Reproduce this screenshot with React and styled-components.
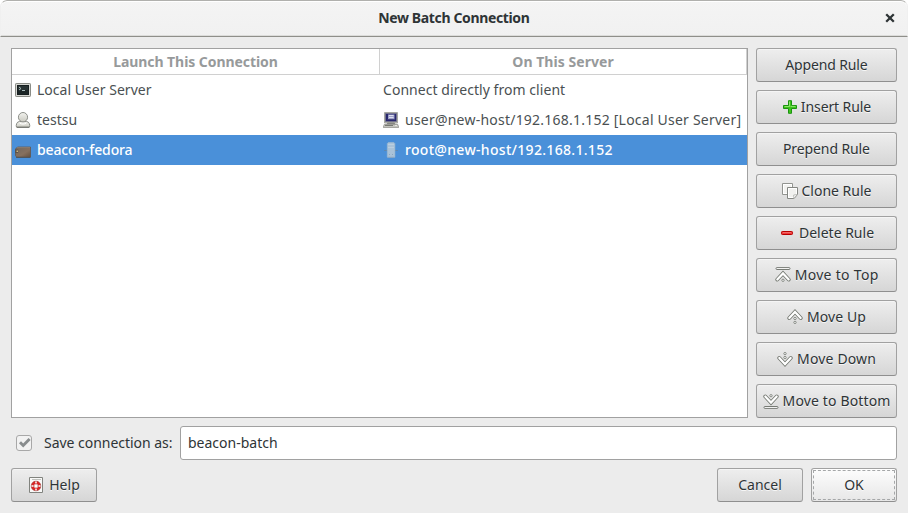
import React from 'react';
import styled, { createGlobalStyle, css } from 'styled-components';

const GlobalStyle = createGlobalStyle`
  *, *::before, *::after { box-sizing: border-box; }
  html, body { margin: 0; background: #fff; overflow: hidden; }
  body { font: 14px/20px "Noto Sans", "Open Sans", sans-serif; color: #2e3436; }
`;

const Dialog = styled.main`
  display: flex;
  flex-direction: column;
  width: 908px;
  height: 513px;
  background: #ececec;
  border-radius: 7px 7px 0 0;
  overflow: hidden;
`;

const TitleBar = styled.header`
  display: grid;
  grid-template-columns: 36px 1fr 36px;
  align-items: center;
  height: 37px;
  flex: none;
  background: linear-gradient(#f4f4f4, #f1f1f1);
  border: 1px solid #f0f0f0;
  border-top-color: #b0b0ad;
  border-bottom: 1px solid #8f8f8a;
  border-radius: 7px 7px 0 0;
  box-shadow: inset 0 1px #fff, inset 0 -1px #dcdcda;
`;

const Title = styled.h1`
  grid-column: 2;
  margin: 0;
  padding-bottom: 1px;
  text-align: center;
  font-size: 14px;
  line-height: 20px;
  font-weight: 700;
`;

const CloseButton = styled.button`
  display: grid;
  place-items: center;
  width: 36px;
  height: 34px;
  padding: 0 0 1px 1px;
  border: 0;
  background: none;
  color: #2e3436;
`;

const Text = styled.span`
  white-space: pre;
  letter-spacing: ${(p) => p.$track || 0}px;
  margin-right: ${(p) => -(p.$track || 0)}px;
`;

const Content = styled.div`
  display: flex;
  flex-direction: column;
  gap: 8px;
  padding: 11px 11px 0;
`;

const MainArea = styled.div`
  display: grid;
  grid-template-columns: 737px 141px;
  gap: 8px;
  height: 370px;
`;

const List = styled.section`
  border: 1px solid #a1a1a1;
  background: #fff;
`;

const columns = css`
  display: grid;
  grid-template-columns: 368px 1fr;
`;

const ListHeader = styled.div`
  ${columns}
  height: 26px;
  border-bottom: 1px solid #d0d0d0;
  border-right: 1px solid #d0d0d0;
  color: #979a9b;
  font-weight: 700;
  line-height: 25px;
  text-align: center;
`;

const HeaderCell = styled.div`
  border-right: ${(p) => (p.$divided ? '1px solid #d0d0d0' : '0')};
`;

const Row = styled.div`
  ${columns}
  height: 30px;
  color: ${(p) => (p.$selected ? '#fff' : '#4a5052')};
  font-weight: ${(p) => (p.$selected ? 500 : 400)};
  background: ${(p) => (p.$selected ? '#4a90d9' : '#fff')};
`;

const Cell = styled.div`
  display: flex;
  align-items: center;
  gap: 6px;
  padding-left: 3px;
`;

const Actions = styled.nav`
  display: flex;
  flex-direction: column;
  gap: 8px;
`;

const Button = styled.button`
  display: flex;
  align-items: center;
  justify-content: center;
  gap: ${(p) => p.$gap || 4}px;
  width: ${(p) => p.$width || 141}px;
  height: 34px;
  flex: none;
  padding: 0;
  border: 1px solid #a1a1a1;
  border-bottom-color: #8f8f8f;
  border-radius: 3px;
  background: ${(p) => (p.$focused ? 'linear-gradient(#fdfdfd, #e7e7e7)' : 'linear-gradient(#eeeeee, #d6d6d6)')};
  box-shadow: inset 0 1px ${(p) => (p.$focused ? '#fff' : '#f5f5f5')};
  color: #2e3436;
  font: inherit;
  text-shadow: 0 1px rgba(255, 255, 255, 0.77);
  ${(p) => p.$focused && css`
    outline: 1px dashed #a5a7a8;
    outline-offset: -3px;
  `}
`;

const SaveRow = styled.div`
  display: grid;
  grid-template-columns: 169px 1fr;
  height: 34px;
`;

const CheckLabel = styled.label`
  display: flex;
  align-items: center;
  gap: 12px;
  padding-left: 5px;
`;

const CheckBox = styled.span`
  display: grid;
  place-items: center;
  width: 16px;
  height: 16px;
  border: 1px solid #a8a8a8;
  border-radius: 3px;
  background: #f2f2f2;
`;

const Field = styled.div`
  display: flex;
  align-items: center;
  padding-left: 7px;
  border: 1px solid #a1a1a1;
  border-radius: 3px;
  background: #fff;
`;

const Footer = styled.footer`
  display: flex;
  gap: 8px;
`;

const Spacer = styled.div`
  flex: 1;
`;

const Icon = styled.svg.attrs({ viewBox: '0 0 16 16', width: 16, height: 16, 'aria-hidden': true })`
  flex: none;
  display: block;
`;

const TerminalIcon = () => (
  <Icon>
    <rect x=".5" y="1.5" width="15" height="13" rx=".7" fill="#d5d6d2" stroke="#898b86" />
    <rect x="2.5" y="3.5" width="11" height="9" fill="#293334" stroke="#161e1f" />
    <path d="M3 8h10v4H3z" fill="#1b2526" />
    <path d="M4 5l2 1.5L4 8M7 8.5h3" fill="none" stroke="#b4c8c8" strokeWidth=".9" />
  </Icon>
);

const UserIcon = () => (
  <Icon>
    <defs>
      <linearGradient id="userFill" x2="0" y2="1"><stop stopColor="#f4f4f0" /><stop offset="1" stopColor="#c9c9c0" /></linearGradient>
    </defs>
    <path d="M1.5 15.2c-.8-1.7.1-5.7 3-5.7h7c2.9 0 3.8 4 3 5.7z" fill="url(#userFill)" stroke="#888a85" />
    <path d="M2 15.3h12" stroke="#6f716c" />
    <ellipse cx="8" cy="5.2" rx="4.6" ry="4.7" fill="url(#userFill)" stroke="#8e908b" />
    <path d="M5 11.3c2 1 4 1 6 0" fill="none" stroke="#fff" />
  </Icon>
);

const WalletIcon = () => (
  <Icon>
    <defs>
      <linearGradient id="leather" x2="1" y2="1"><stop stopColor="#71685e" /><stop offset=".6" stopColor="#86705e" /><stop offset="1" stopColor="#63503f" /></linearGradient>
    </defs>
    <path d="M.5 7l2-2h13v10H1.7L.5 13.7z" fill="url(#leather)" stroke="#62574e" strokeWidth=".8" />
    <path d="M2 5.6h13" stroke="#94877a" strokeWidth=".7" />
    <path d="M0 7.5h3.2v3.5H0z" fill="#5d5147" />
    <path d="M1.5 8.5h1.5v1.5H1.5z" fill="#cdb67e" />
    <path d="M1 15.5h14.5" stroke="#4e473f" strokeWidth=".7" />
  </Icon>
);

const ComputerIcon = () => (
  <Icon>
    <path d="M1.5.5h13v10.5h-13z" fill="#b9b9b4" stroke="#a7a7a1" />
    <path d="M2.5 1.5h11v8h-11z" fill="#28276e" stroke="#73738d" />
    <path d="M5 2.5h6.5v5H5z" fill="#9ea1c9" />
    <path d="M6 3.5h4.5M6 5.5h4.5" stroke="#dcdeed" />
    <path d="M4.5 7.5h7" stroke="#44447d" />
    <path d="M4.5 10.5h7l1 2h-9z" fill="#858681" />
    <path d="M1.2 12.5h13.6l1 3H.2z" fill="#c4c4bd" stroke="#8d8d87" strokeWidth=".7" />
    <path d="M2 13.5h8" stroke="#777972" />
    <path d="M12 13.5h2" stroke="#e7e7e2" />
  </Icon>
);

const ServerIcon = () => (
  <Icon>
    <path d="M1 8.5h14" stroke="#5b87b0" />
    <path d="M4.3 1.5l1-1h5.6l1 1v13.8H4.3z" fill="#a9c2d8" stroke="#9db9d0" strokeWidth=".6" />
    <path d="M5 2.5h6M5 5.5h6" stroke="#c4d6e5" strokeWidth=".6" />
    <path d="M6 12.5h1M9 12.5h1M5 15.3h6" stroke="#8ba7c0" />
  </Icon>
);

const PlusIcon = () => (
  <Icon>
    <path d="M6.5 1.7h3v4.8h5v3h-5v4.8h-3V9.5h-5v-3h5z" fill="#3fc41c" stroke="#1a940f" strokeLinejoin="round" />
    <path d="M7.5 2.5v5h-5" fill="none" stroke="#a3ed83" strokeWidth=".8" />
    <path d="M8.5 7.4h5" fill="none" stroke="#a3ed83" strokeWidth=".8" />
  </Icon>
);

const MinusIcon = () => (
  <Icon>
    <rect x="2.5" y="6.5" width="11" height="3" rx=".8" fill="#ee3d3d" stroke="#b90000" />
    <path d="M4 7.5h8" stroke="#f57e7e" strokeWidth=".7" />
  </Icon>
);

const CopyIcon = () => (
  <Icon>
    <path d="M.5.5h10v11H.5z" fill="#fff" stroke="#929490" />
    <path d="M2 2h7v8H2z" fill="#f2f2f0" />
    <path d="M5.5 4.5h10v7l-3.5 4H5.5z" fill="#fff" stroke="#858783" strokeLinejoin="round" />
    <path d="M7 6h7v5l-3 3H7z" fill="#f1f1ef" />
    <path d="M15.3 11.5l-3.6.5.1 3.5z" fill="#fff" stroke="#a0a29e" strokeWidth=".7" />
  </Icon>
);

const Chevron = ({ top }) => {
  const d = `M2.3 ${top + 6.1}L8 ${top}l5.7 6.1`;
  return (
    <g fill="none" strokeLinecap="round">
      <path d={d} stroke="#747871" strokeWidth="3.9" strokeLinejoin="miter" />
      <path d={d} stroke="#fff" strokeWidth="2.2" />
    </g>
  );
};

const Dot = ({ y }) => <circle cx="8" cy={y} r="1.15" fill="#fff" stroke="#747871" strokeWidth=".85" />;

function ArrowIcon({ down = false, edge = false }) {
  return (
    <Icon>
      <g transform={down ? 'translate(0 16) scale(1 -1)' : undefined}>
        {edge ? (
          <>
            <rect x="1" y=".6" width="14" height="1.9" rx=".9" fill="#fff" stroke="#696d66" strokeWidth=".9" />
            <Chevron top={6.4} />
            <Dot y={13.3} />
          </>
        ) : (
          <>
            <Chevron top={2.9} />
            <Dot y={9.5} />
            <Dot y={13.4} />
          </>
        )}
      </g>
    </Icon>
  );
}

const HelpIcon = () => (
  <Icon>
    <path d="M1.5.5h13v15h-13z" fill="#f9f9f8" stroke="#81837e" />
    <path d="M4 2.5h9" stroke="#c0c2be" />
    <circle cx="8" cy="9" r="3.6" fill="#fff" stroke="#dc2424" strokeWidth="2.6" />
    <path d="M8 4v2.6M8 11.4V14M3 9h2.6M10.4 9H13" stroke="#fff" strokeWidth="1.5" />
    <circle cx="8" cy="9" r="4.8" fill="none" stroke="#a04440" strokeWidth=".6" />
    <circle cx="8" cy="9" r="2.1" fill="#fff" stroke="#b03c39" strokeWidth=".6" />
  </Icon>
);

const rows = [
  { icon: <TerminalIcon />, name: 'Local User Server', track: 0.03, target: 'Connect directly from client', targetTrack: 0.05 },
  { icon: <UserIcon />, name: 'testsu', targetIcon: <ComputerIcon />, target: 'user@new-host/192.168.1.152 [Local User Server]', targetTrack: 0.225 },
  { icon: <WalletIcon />, name: 'beacon-fedora', track: -0.15, targetIcon: <ServerIcon />, target: 'root@new-host/192.168.1.152', targetTrack: 0.31, selected: true },
];

const actions = [
  { label: 'Append Rule', track: -0.15 },
  { label: 'Insert Rule', icon: <PlusIcon />, track: -0.1, gap: 3 },
  { label: 'Prepend Rule', track: -0.1 },
  { label: 'Clone Rule', icon: <CopyIcon /> },
  { label: 'Delete Rule', icon: <MinusIcon /> },
  { label: 'Move to Top', icon: <ArrowIcon edge />, track: 0.3 },
  { label: 'Move Up', icon: <ArrowIcon />, track: 0.1 },
  { label: 'Move Down', icon: <ArrowIcon down />, track: 0.15 },
  { label: 'Move to Bottom', icon: <ArrowIcon down edge />, track: 0.15 },
];

export default function App() {
  return (
    <>
      <GlobalStyle />
      <Dialog>
        <TitleBar>
          <Title><Text $track={-0.36}>New Batch Connection</Text></Title>
          <CloseButton aria-label="Close">
            <svg width="10" height="10" viewBox="0 0 10 10"><path d="M1.2 1.2l7.6 7.6M8.8 1.2l-7.6 7.6" stroke="currentColor" strokeWidth="2.3" /></svg>
          </CloseButton>
        </TitleBar>
        <Content>
          <MainArea>
            <List>
              <ListHeader>
                <HeaderCell $divided><Text $track={-0.07}>Launch This Connection</Text></HeaderCell>
                <HeaderCell><Text $track={0.05}>On This Server</Text></HeaderCell>
              </ListHeader>
              {rows.map((r) => (
                <Row key={r.name} $selected={r.selected}>
                  <Cell>{r.icon}<Text $track={r.track}>{r.name}</Text></Cell>
                  <Cell>{r.targetIcon}<Text $track={r.targetTrack}>{r.target}</Text></Cell>
                </Row>
              ))}
            </List>
            <Actions>
              {actions.map((a) => (
                <Button key={a.label} $gap={a.gap}>{a.icon}<Text $track={a.track}>{a.label}</Text></Button>
              ))}
            </Actions>
          </MainArea>
          <SaveRow>
            <CheckLabel>
              <CheckBox>
                <svg width="14" height="14" viewBox="0 0 14 14"><path d="M3 6.3l3.2 3.2L12.6 3" fill="none" stroke="#898d8e" strokeWidth="2.9" /></svg>
              </CheckBox>
              <Text $track={-0.03}>Save connection as:</Text>
            </CheckLabel>
            <Field><Text>beacon-batch</Text></Field>
          </SaveRow>
          <Footer>
            <Button $width={86} $gap={5}><HelpIcon /><Text>Help</Text></Button>
            <Spacer />
            <Button $width={86}><Text>Cancel</Text></Button>
            <Button $width={86} $focused><Text>OK</Text></Button>
          </Footer>
        </Content>
      </Dialog>
    </>
  );
}
